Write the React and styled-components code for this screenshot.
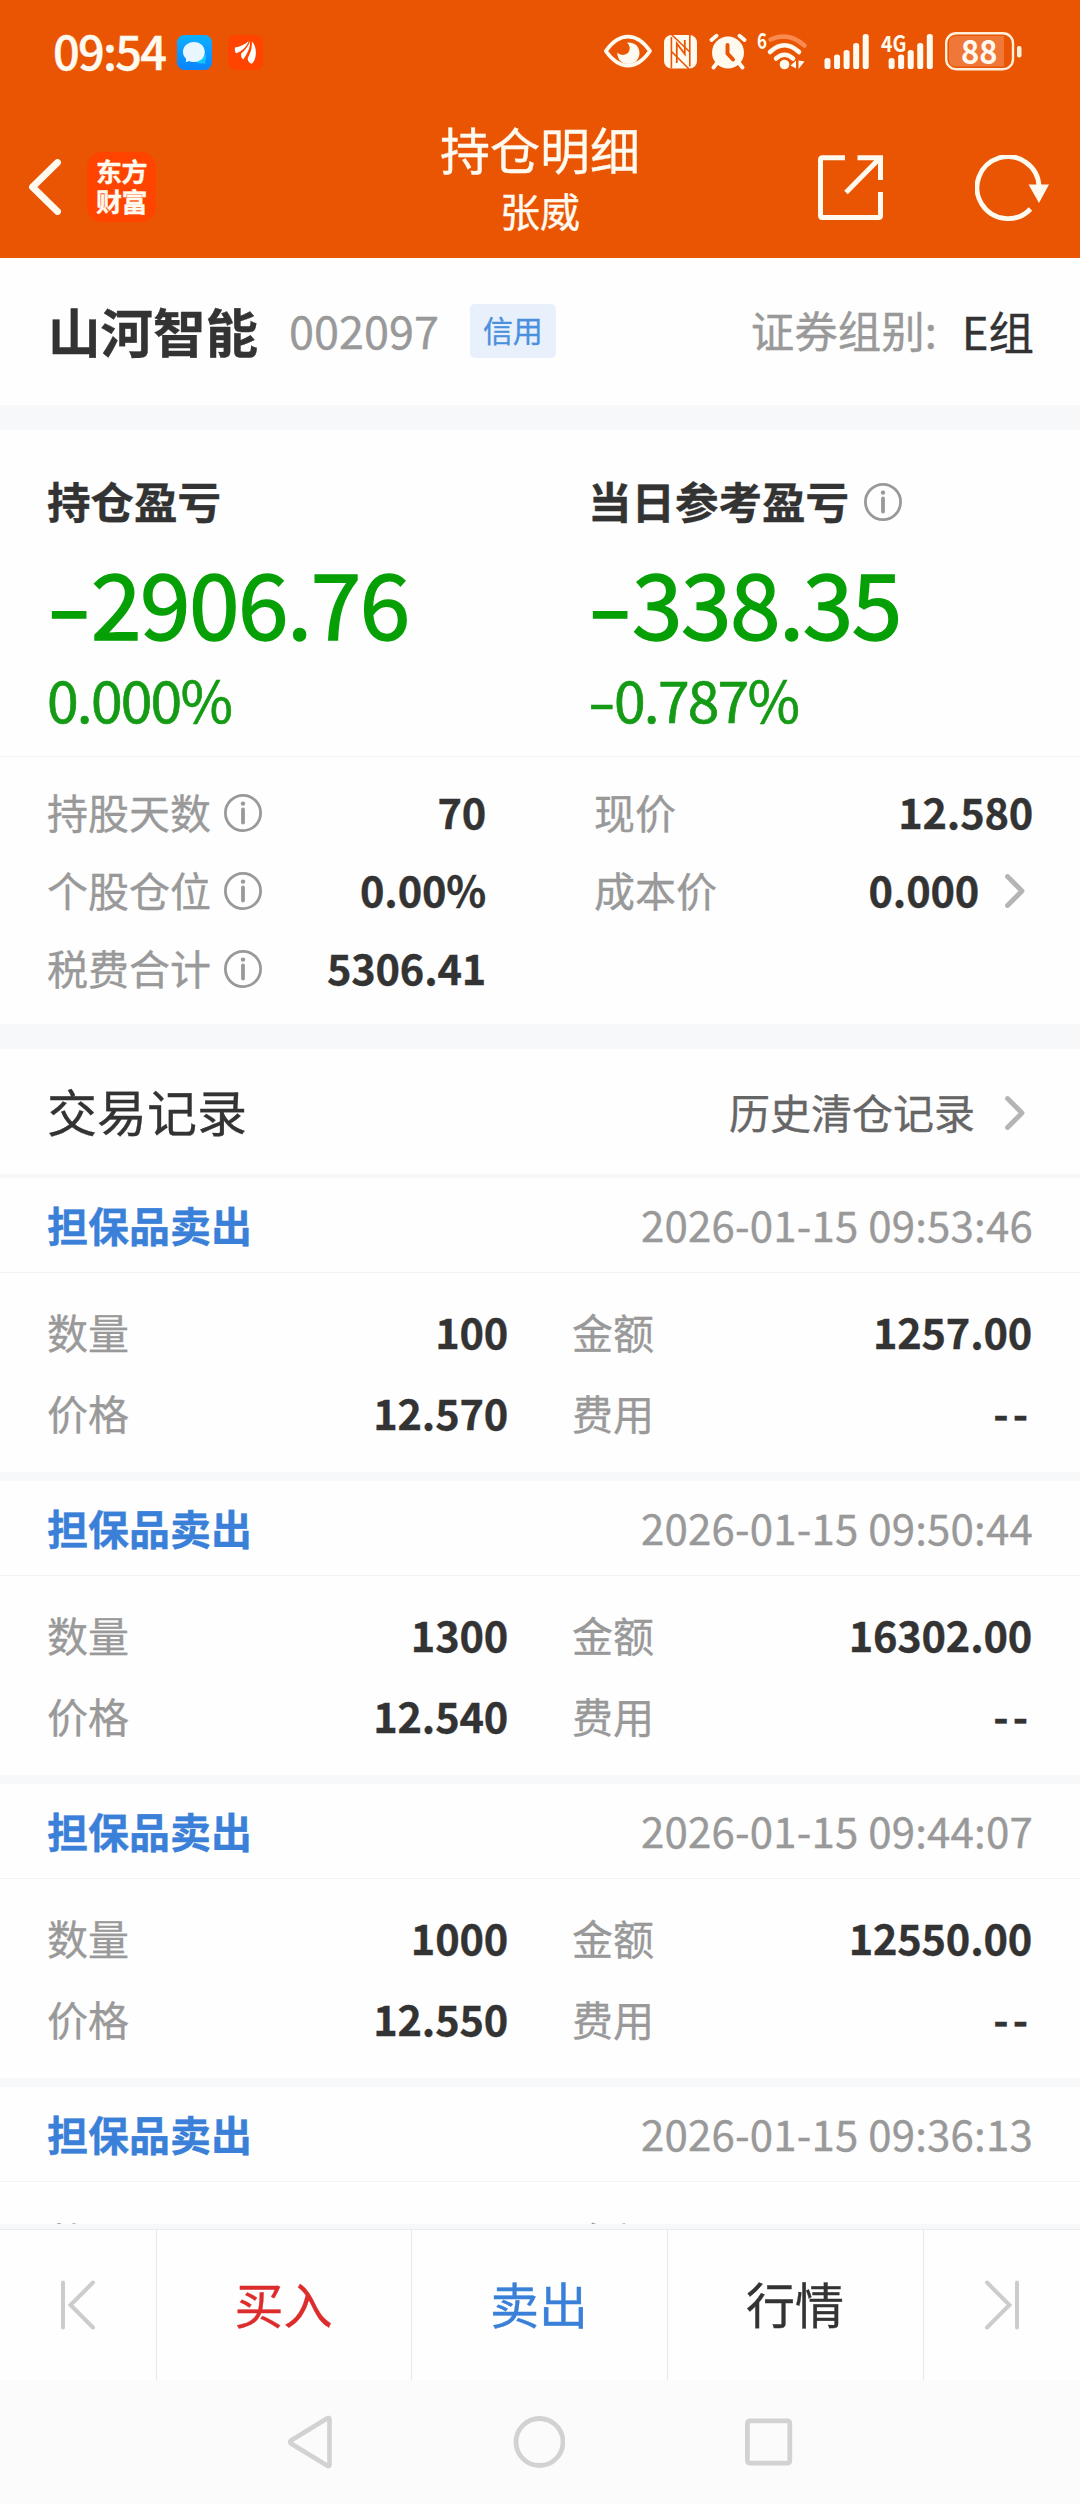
import React from 'react'
import styled, {createGlobalStyle} from 'styled-components'

const GlobalStyle = createGlobalStyle`
  body {
    margin: 0;
    background: #fff;
    font-family: "Noto Sans CJK SC", "Noto Sans", sans-serif;
    color: #333;
    -webkit-text-stroke: 0.35px currentColor;
  }
  svg {
    display: block;
    flex: none;
  }
`

const Screen = styled.div`
  display: flex;
  flex-direction: column;
  width: 1080px;
  height: 2504px;
  overflow: hidden;
  background: #fefefe;
`

const Top = styled.header`
  flex: none;
  height: 258px;
  background: #e95503;
  color: #fffaf0;
`

const StatusBar = styled.div`
  display: flex;
  justify-content: space-between;
  height: 104px;
  padding: 0 58px 0 53px;
  box-sizing: border-box;
`

const StatusSide = styled.div`
  display: flex;
  align-items: center;
  height: 104px;
`

const Clock = styled.span`
  width: 124px;
  margin-bottom: 4px;
  font-size: 47px;
  font-weight: 500;
  line-height: 100px;
  letter-spacing: -1.8px;
`

const NoticeIcons = styled.div`
  display: flex;
  gap: 16px;
`

const TitleBar = styled.div`
  display: grid;
  grid-template-columns: 1fr auto 1fr;
  height: 154px;
`

const TitleLeft = styled.div`
  display: flex;
  align-items: flex-start;
  gap: 26px;
  padding: 48px 0 0 28px;
`

const BackIcon = styled.svg`
  margin-top: 7px;
`

const BrandTile = styled.div`
  display: flex;
  flex-direction: column;
  align-items: center;
  justify-content: center;
  width: 69px;
  height: 70px;
  padding-bottom: 3px;
  box-sizing: border-box;
  border-radius: 15px;
  background: #ff4400;
  font-size: 26px;
  font-weight: 700;
  line-height: 30px;
  letter-spacing: -0.5px;
`

const TitleCenter = styled.div`
  display: flex;
  flex-direction: column;
  align-items: center;
`

const Title = styled.h1`
  margin: 7px 0 0;
  font-size: 50px;
  font-weight: 400;
  line-height: 74px;
`

const Owner = styled.span`
  font-size: 40px;
  line-height: 50px;
`

const TitleRight = styled.div`
  display: flex;
  justify-content: flex-end;
  align-items: flex-start;
  gap: 91px;
  padding: 51px 31px 0 0;
`

const Gap = styled.div`
  flex: none;
  height: 25px;
  background: #f6f8fa;
`

const StockRow = styled.section`
  flex: none;
  display: flex;
  align-items: center;
  height: 147px;
  padding: 0 46px 0 48px;
`

const StockName = styled.h2`
  margin: 0 31px 4px 0;
  font-size: 52.5px;
  font-weight: 700;
`

const StockCode = styled.span`
  margin: 0 31px 4px 0;
  font-size: 45px;
  color: #999;
`

const Badge = styled.span`
  width: 86px;
  height: 54px;
  margin-bottom: 1px;
  border-radius: 5px;
  background: #e8f1fb;
  color: #4a90dc;
  font-size: 30px;
  line-height: 51px;
  text-align: center;
`

const GroupLabel = styled.span`
  margin: 0 0 4px auto;
  width: 211px;
  font-size: 43.5px;
  color: #999;
`

const GroupValue = styled.span`
  margin-bottom: 4px;
  font-size: 45.5px;
`

const Summary = styled.section`
  flex: none;
  display: grid;
  grid-template-columns: 541px 1fr;
  height: 327px;
  padding: 0 0 0 47px;
  box-sizing: border-box;
  border-bottom: 1px solid #f3f3f3;
`

const SummaryTitle = styled.div`
  display: flex;
  align-items: center;
  gap: 15px;
  height: 64px;
  padding-top: 40px;
`

const SummaryName = styled.span`
  margin-bottom: 4px;
  font-size: 43.5px;
  font-weight: 700;
`

const Profit = styled.div`
  height: 132px;
  font-size: 91px;
  line-height: 132px;
  letter-spacing: -1.5px;
  color: #06a006;
  -webkit-text-stroke-width: 1.4px;
`

const Percent = styled.div`
  height: 64px;
  font-size: 57px;
  line-height: 64px;
  letter-spacing: -1.8px;
  color: #149a14;
  -webkit-text-stroke-width: 0.7px;
`

const Sign = styled.span`
  display: inline-block;
  width: ${props => props.width}px;
  transform: scaleX(1.4);
  transform-origin: 0 50%;
`

const Stats = styled.section`
  flex: none;
  display: grid;
  grid-template-columns: 438px 438px;
  column-gap: 109px;
  height: 267px;
  padding: 17px 48px 0 47px;
  box-sizing: border-box;
`

const StatLine = styled.div`
  display: flex;
  align-items: center;
  height: 78px;
`

const Label = styled.span`
  margin-bottom: 4px;
  font-size: 41px;
  color: #999;
`

const InfoIcon = styled.svg`
  margin-left: ${props => props.$flush ? 0 : 13}px;
`

const Value = styled.span`
  margin: 0 -1px 4px auto;
  font-size: 41.5px;
  font-weight: 700;
  letter-spacing: ${props => props.$dashes ? 4 : -0.2}px;
  color: #333;
`

const Arrow = styled.svg`
  margin: 0 7px 0 27px;
`

const RecordsHead = styled.section`
  flex: none;
  display: flex;
  align-items: center;
  height: 125px;
  padding: 2px 48px 0 47px;
  box-sizing: border-box;
  border-bottom: 4px solid #f7f7f7;
  height: 129px;
`

const RecordsTitle = styled.h3`
  margin: 0 auto 6px 0;
  font-size: 50px;
  font-weight: 400;
`

const HistoryLink = styled.span`
  margin: 0 3px 3px 0;
  font-size: 41px;
  color: #666;
`

const RecordList = styled.section`
  flex: none;
  height: 1046px;
  overflow: hidden;
`

const Record = styled.article`
  height: 294px;
  border-bottom: 9px solid #f6f8fa;
`

const RecordHead = styled.div`
  display: flex;
  align-items: center;
  justify-content: space-between;
  height: 94px;
  padding: 0 47px;
  border-bottom: 1px solid #f3f3f3;
`

const Action = styled.span`
  margin-bottom: 3px;
  font-size: 41px;
  font-weight: 700;
  color: #3a80d8;
`

const Time = styled.span`
  margin-bottom: 4px;
  font-size: 42px;
  letter-spacing: 0.2px;
  color: #999;
`

const RecordBody = styled.div`
  display: grid;
  grid-template-columns: 460px 459px;
  column-gap: 65px;
  padding: 19px 48px 0 47px;
`

const RecordLine = styled.div`
  display: flex;
  align-items: center;
  height: 81px;
`

const TabBar = styled.footer`
  flex: none;
  display: grid;
  grid-template-columns: 157px 255px 256px 256px 156px;
  height: 151px;
  border-top: 5px solid #f6f8fa;
  box-shadow: inset 0 1px 0 #e9ebee;
`

const Tab = styled.div`
  display: flex;
  align-items: center;
  justify-content: center;
  box-sizing: border-box;
  border-right: ${props => props.$last ? 'none' : '1px solid #e8e8e8'};
  color: ${props => props.color || '#333'};
`

const TabName = styled.span`
  margin: 0 1px 5px 0;
  font-size: 49px;
`

const NavBar = styled.nav`
  flex: 1;
  display: flex;
  justify-content: center;
  align-items: center;
  gap: 180px;
  background: #fbfbfb;
`

const Info = ({flush}) => (
  <InfoIcon $flush={flush} width="38" height="38" viewBox="0 0 38 38">
    <circle cx="19" cy="19" r="17.6" fill="none" stroke="#999" strokeWidth="2.8" />
    <circle cx="19" cy="9.6" r="2.2" fill="#999" />
    <path d="M19 15.5V28.5" stroke="#999" strokeWidth="3.8" strokeLinecap="round" />
  </InfoIcon>
)

const Chevron = () => (
  <Arrow width="20" height="34" viewBox="0 0 20 34">
    <path d="M2.5 2.5L17 17L2.5 31.5" fill="none" stroke="#b4b4b4" strokeWidth="4.8" strokeLinecap="round" strokeLinejoin="round" />
  </Arrow>
)

const barTops = [58, 54.5, 50, 43, 34]

const Bars = ({x}) => barTops.map((top, i) => (
  <rect key={top} x={x + i * 9.55} y={top} width="6" height={69 - top} rx="2.6" fill="#fffaf0" />
))

const StatusIcons = () => (
  <svg width="420" height="60" viewBox="602 22 420 60">
    {/* eye comfort */}
    <path d="M605.8 51Q616 36.6 628 36.6T650 51Q640 65.6 628 65.6T605.8 51Z" fill="none" stroke="#fffaf0" strokeWidth="3.8" strokeLinejoin="round" />
    <path d="M627 42.5C636 42 639.5 47.5 639.5 53C639.5 59.5 634.5 64 628.5 64C622 64 617.5 60 617.2 52.5C621 56.5 628 55.5 629.5 50C630.2 47 629 44 627 42.5Z" fill="#fffaf0" />
    {/* nfc */}
    <rect x="664" y="35" width="33" height="33.5" rx="7.5" fill="#fffaf0" />
    <path d="M671.4 37V68.500M689.800 35V66.500M671.500 34.500L689.800 52M671.500 51.500L689 69" fill="none" stroke="#e95503" strokeWidth="1.600" />
    <path d="M676.800 63V43.500L684.800 54V40" fill="none" stroke="#e95503" strokeWidth="1.800" />
    {/* alarm */}
    <circle cx="728" cy="52.5" r="16" fill="#fffaf0" />
    <path d="M711.5 40L716.5 35.8M744.5 40L739.5 35.8M717 63L713.5 67.5M739 63L742.5 67.5" stroke="#fffaf0" strokeWidth="4" strokeLinecap="round" />
    <path d="M727.5 45V53.5L733 59.5" fill="none" stroke="#e95503" strokeWidth="4" strokeLinecap="round" />
    {/* wifi */}
    <text x="757" y="49" fontSize="22" fontWeight="700" fill="#fffaf0" textLength="10" lengthAdjust="spacingAndGlyphs">6</text>
    <path d="M770.5 39.5Q788 31.5 804.5 45.5" fill="none" stroke="#fa8a50" strokeWidth="4.5" strokeLinecap="round" />
    <path d="M770 52Q784.5 38.5 799 52" fill="none" stroke="#fffaf0" strokeWidth="4.5" strokeLinecap="round" />
    <path d="M776 58.5Q784.5 51 793 58.5" fill="none" stroke="#fffaf0" strokeWidth="4.5" strokeLinecap="round" />
    <circle cx="784.5" cy="64.5" r="4.8" fill="#fffaf0" />
    <path d="M796 60.5V68.5L790.5 65.5ZM798.5 60.5V69L804.5 61.5Z" fill="#fffaf0" />
    {/* signal */}
    <Bars x={824.5} />
    <text x="881" y="51.5" fontSize="22.5" fontWeight="700" fill="#fffaf0" textLength="25.5" lengthAdjust="spacingAndGlyphs">4G</text>
    <Bars x={888.6} />
    {/* battery */}
    <rect x="946.2" y="33.2" width="66.8" height="36" rx="10" fill="#e95503" stroke="#fff0dc" strokeWidth="2.4" />
    <path d="M956 36H1004V66.5H956Q949 66.5 949 59.5V43Q949 36 956 36Z" fill="#ef7839" />
    <text x="961" y="64" fontSize="33.5" fontWeight="700" fill="#fffaf0" textLength="36.5" lengthAdjust="spacingAndGlyphs">88</text>
    <rect x="1017" y="46" width="4.5" height="11.5" rx="2" fill="#fff0dc" />
  </svg>
)

const MessageIcon = () => (
  <svg width="35" height="35" viewBox="0 0 35 35">
    <defs>
      <linearGradient id="msg" x1="0" y1="0" x2="0" y2="1">
        <stop offset="0" stopColor="#0cb0ff" />
        <stop offset="1" stopColor="#0a84ff" />
      </linearGradient>
    </defs>
    <rect width="35" height="35" rx="7.5" fill="url(#msg)" />
    <path d="M29 19.5C29.5 23 29 25 28 26L28.5 28.8L25.5 28.3C22 29.3 19.5 27.5 18.5 26Z" fill="#13c6ff" />
    <path d="M17 7C23.2 7 27.8 11.3 27.8 17S23.2 27 17 27C15 27 13.5 26.6 12 25.9L8.8 27.3L9.2 23.8C7.2 22 6 19.8 6 17C6 11.3 10.8 7 17 7Z" fill="#e8f7ff" />
  </svg>
)

const WingIcon = () => (
  <svg width="35" height="35" viewBox="0 0 35 35">
    <rect width="35" height="35" rx="7.5" fill="#ff4400" />
    <path d="M7 12.5C12 12 17 9.5 20.5 6.3C19.5 10.5 14 16.5 8.5 18.2C7 18.7 6.5 13 7 12.5ZM22 6.3C22.5 12.5 19 19.5 15.2 24.5C13.5 23 12.8 21.5 13.2 18.5C17 15.5 20.5 11 22 6.3ZM23.8 6.3C27.5 10 28.5 16 27.5 21.5C27 25 25 28.5 23.3 28.8C20.5 27.5 19.5 25.5 19.8 23C22.5 18 24.5 12 23.8 6.3Z" fill="#fff" />
  </svg>
)

const holdingStats = [
  {label: '持股天数', value: '70', info: true},
  {label: '个股仓位', value: '0.00%', info: true},
  {label: '税费合计', value: '5306.41', info: true},
]

const priceStats = [
  {label: '现价', value: '12.580'},
  {label: '成本价', value: '0.000', link: true},
]

const records = [
  {time: '2026-01-15 09:53:46', count: '100', amount: '1257.00', price: '12.570'},
  {time: '2026-01-15 09:50:44', count: '1300', amount: '16302.00', price: '12.540'},
  {time: '2026-01-15 09:44:07', count: '1000', amount: '12550.00', price: '12.550'},
  {time: '2026-01-15 09:36:13'},
]

const StatColumn = ({items}) => (
  <div>
    {items.map(item => (
      <StatLine key={item.label}>
        <Label>{item.label}</Label>
        {item.info && <Info />}
        <Value>{item.value}</Value>
        {item.link && <Chevron />}
      </StatLine>
    ))}
  </div>
)

const Field = ({label, value}) => (
  <RecordLine>
    <Label>{label}</Label>
    {value && <Value $dashes={value === '--'}>{value}</Value>}
  </RecordLine>
)

const App = () => (
  <Screen>
    <GlobalStyle />
    <Top>
      <StatusBar>
        <StatusSide>
          <Clock>09:54</Clock>
          <NoticeIcons>
            <MessageIcon />
            <WingIcon />
          </NoticeIcons>
        </StatusSide>
        <StatusSide>
          <StatusIcons />
        </StatusSide>
      </StatusBar>
      <TitleBar>
        <TitleLeft>
          <BackIcon width="33" height="56" viewBox="0 0 33 56">
            <path d="M29.500 3.500L4.500 28L29.500 52.500" fill="none" stroke="#fffaf0" strokeWidth="6.800" strokeLinecap="round" strokeLinejoin="round" />
          </BackIcon>
          <BrandTile>
            <span>东方</span>
            <span>财富</span>
          </BrandTile>
        </TitleLeft>
        <TitleCenter>
          <Title>持仓明细</Title>
          <Owner>张威</Owner>
        </TitleCenter>
        <TitleRight>
          <svg width="66" height="66" viewBox="0 0 66 66">
            <path d="M27 2.800H4.500Q2.500 2.800 2.500 4.800V60.500Q2.500 62.500 4.500 62.500H60.500Q62.500 62.500 62.500 60.500V37M39.500 2.800H62.500V25M62 3L28 37.500" fill="none" stroke="#fffaf0" strokeWidth="5" />
          </svg>
          <svg width="74" height="68" viewBox="0 0 74 68">
            <path d="M55.500 54A31 31 0 1 1 64 31" fill="none" stroke="#fffaf0" strokeWidth="4.800" />
            <path d="M53.500 29.500H74L64 48Z" fill="#fffaf0" />
          </svg>
        </TitleRight>
      </TitleBar>
    </Top>
    <StockRow>
      <StockName>山河智能</StockName>
      <StockCode>002097</StockCode>
      <Badge>信用</Badge>
      <GroupLabel>证券组别:</GroupLabel>
      <GroupValue>E组</GroupValue>
    </StockRow>
    <Gap />
    <Summary>
      <div>
        <SummaryTitle>
          <SummaryName>持仓盈亏</SummaryName>
        </SummaryTitle>
        <Profit><Sign width={44}>-</Sign>2906.76</Profit>
        <Percent>0.000%</Percent>
      </div>
      <div>
        <SummaryTitle>
          <SummaryName>当日参考盈亏</SummaryName>
          <Info flush />
        </SummaryTitle>
        <Profit><Sign width={44}>-</Sign>338.35</Profit>
        <Percent><Sign width={26}>-</Sign>0.787%</Percent>
      </div>
    </Summary>
    <Stats>
      <StatColumn items={holdingStats} />
      <StatColumn items={priceStats} />
    </Stats>
    <Gap />
    <RecordsHead>
      <RecordsTitle>交易记录</RecordsTitle>
      <HistoryLink>历史清仓记录</HistoryLink>
      <Chevron />
    </RecordsHead>
    <RecordList>
      {records.map(record => (
        <Record key={record.time}>
          <RecordHead>
            <Action>担保品卖出</Action>
            <Time>{record.time}</Time>
          </RecordHead>
          <RecordBody>
            <Field label="数量" value={record.count} />
            <Field label="金额" value={record.amount} />
            {record.price && <Field label="价格" value={record.price} />}
            {record.price && <Field label="费用" value="--" />}
          </RecordBody>
        </Record>
      ))}
    </RecordList>
    <TabBar>
      <Tab>
        <svg width="36" height="50" viewBox="0 0 36 50">
          <path d="M3 2.500V47.500M33 2.500L10.500 25L33 47.500" fill="none" stroke="#ccc" strokeWidth="4" strokeLinecap="round" />
        </svg>
      </Tab>
      <Tab color="#dc2c2c"><TabName>买入</TabName></Tab>
      <Tab color="#3a80d8"><TabName>卖出</TabName></Tab>
      <Tab><TabName>行情</TabName></Tab>
      <Tab $last>
        <svg width="36" height="50" viewBox="0 0 36 50">
          <path d="M33 2.500V47.500M3 2.500L25.500 25L3 47.500" fill="none" stroke="#ccc" strokeWidth="4" strokeLinecap="round" />
        </svg>
      </Tab>
    </TabBar>
    <NavBar>
      <svg width="46" height="54" viewBox="0 0 46 54">
        <path d="M42.500 4.500V49.500Q42.500 52 40 50.500L4 28.500Q2 27 4 25.500L40 3.500Q42.500 2 42.500 4.500Z" fill="none" stroke="#d2d2d2" strokeWidth="4.600" />
      </svg>
      <svg width="52" height="52" viewBox="0 0 52 52">
        <circle cx="26.500" cy="26" r="23.500" fill="none" stroke="#d2d2d2" strokeWidth="4.800" />
      </svg>
      <svg width="48" height="48" viewBox="0 0 48 48">
        <rect x="2.400" y="2.800" width="42.400" height="42.400" rx="2.500" fill="none" stroke="#d2d2d2" strokeWidth="4.800" />
      </svg>
    </NavBar>
  </Screen>
)

export default App
